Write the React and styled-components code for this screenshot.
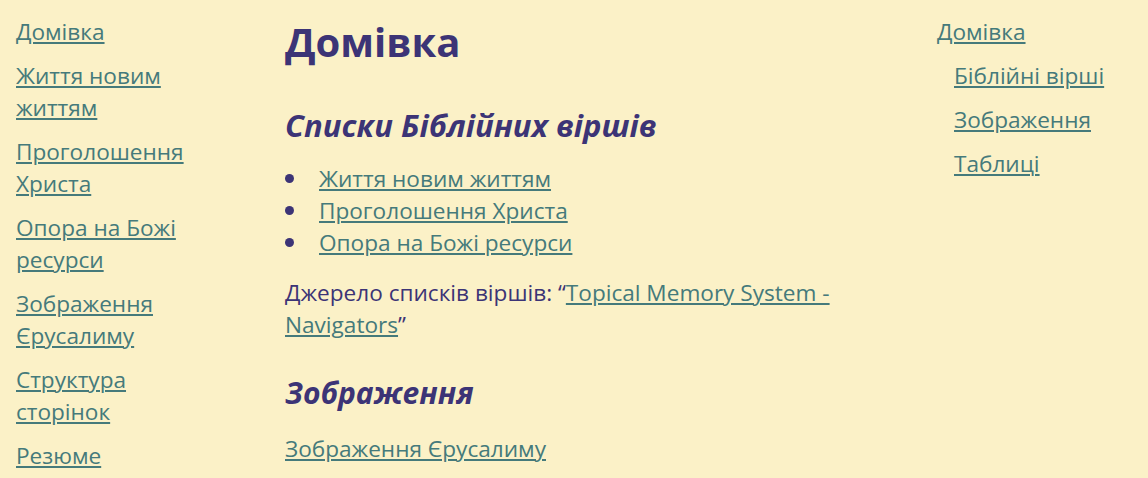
import React from 'react';
import styled, { createGlobalStyle } from 'styled-components';

const GlobalStyle = createGlobalStyle`
  html, body {
    margin: 0;
    padding: 0;
    background: #fbf1c7;
  }
  body {
    font-family: "Open Sans", "Noto Sans", sans-serif;
    color: #3c3476;
  }
`;

const Page = styled.div`
  display: flex;
  align-items: flex-start;
  padding: 16px;
  min-height: 478px;
  box-sizing: border-box;
  background: #fbf1c7;
`;

const Link = styled.a`
  color: #457a7b;
  text-decoration: underline;
  text-decoration-thickness: 2px;
  text-underline-offset: 2px;
  cursor: pointer;
`;

const SideNav = styled.nav`
  width: ${(p) => p.$width}px;
  flex-shrink: 0;
  font-size: 22.6px;
  line-height: 32px;
`;

const NavList = styled.ul`
  list-style: none;
  margin: 0;
  padding: 0 0 0 ${(p) => p.$indent || 0}px;
`;

const NavItem = styled.li`
  margin: 0;
  & + & {
    margin-top: 12px;
  }
  > ul {
    margin-top: 12px;
  }
`;

const Main = styled.main`
  width: 590px;
  flex-shrink: 0;
  margin: 0 62px 0 69px;
  font-size: 22.6px;
  line-height: 32px;
`;

const Title = styled.h1`
  margin: 0;
  font-size: 40px;
  line-height: 52px;
  font-weight: 700;
`;

const Section = styled.h2`
  margin: ${(p) => p.$top || 39}px 0 20px;
  font-size: ${(p) => p.$size || 31}px;
  line-height: 36px;
  font-weight: 700;
  font-style: italic;
`;

const Bullets = styled.ul`
  list-style: none;
  margin: 0;
  padding: 0;
`;

const Bullet = styled.li`
  &::before {
    content: '';
    display: inline-block;
    width: 9px;
    height: 9px;
    border-radius: 50%;
    background: #3c3476;
    margin-right: 25px;
    vertical-align: 4px;
  }
`;

const Para = styled.p`
  margin: ${(p) => p.$top || 18}px 0 0;
`;

const leftLinks = [
  'Домівка',
  'Життя новим життям',
  'Проголошення Христа',
  'Опора на Божі ресурси',
  'Зображення Єрусалиму',
  'Структура сторінок',
  'Резюме',
];

const verseLists = ['Життя новим життям', 'Проголошення Христа', 'Опора на Божі ресурси'];

const tocLinks = ['Біблійні вірші', 'Зображення', 'Таблиці'];

const App = () => (
  <>
    <GlobalStyle />
    <Page>
      <SideNav $width={200}>
        <NavList>
          {leftLinks.map((name) => (
            <NavItem key={name}>
              <Link href="#">{name}</Link>
            </NavItem>
          ))}
        </NavList>
      </SideNav>

      <Main>
        <Title>Домівка</Title>
        <Section>Списки Біблійних віршів</Section>
        <Bullets>
          {verseLists.map((name) => (
            <Bullet key={name}>
              <Link href="#">{name}</Link>
            </Bullet>
          ))}
        </Bullets>
        <Para>
          Джерело списків віршів: “<Link href="#">Topical Memory System - Navigators</Link>”
        </Para>
        <Section as="h3" $top={34} $size={30}>Зображення</Section>
        <Para $top={22}>
          <Link href="#">Зображення Єрусалиму</Link>
        </Para>
      </Main>

      <SideNav $width={195}>
        <NavList>
          <NavItem>
            <Link href="#">Домівка</Link>
            <NavList $indent={17}>
              {tocLinks.map((name) => (
                <NavItem key={name}>
                  <Link href="#">{name}</Link>
                </NavItem>
              ))}
            </NavList>
          </NavItem>
        </NavList>
      </SideNav>
    </Page>
  </>
);

export default App;
